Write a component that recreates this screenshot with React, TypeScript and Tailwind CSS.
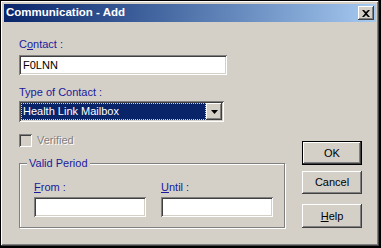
import React from 'react';

const raised =
  'shadow-[inset_-1px_-1px_0_#404040,inset_1px_1px_0_#ffffff,inset_-2px_-2px_0_#808080,inset_2px_2px_0_#d4d0c8]';
const sunken =
  'shadow-[inset_1px_1px_0_#808080,inset_-1px_-1px_0_#ffffff,inset_2px_2px_0_#404040,inset_-2px_-2px_0_#d4d0c8]';

function Label({ children }: { children: React.ReactNode }) {
  return <div className="h-[13px] text-[11px] leading-[13px] text-[#1a1a9c]">{children}</div>;
}

function Field({ value, className }: { value?: string; className: string }) {
  return (
    <div className={`bg-white ${sunken} ${className} flex items-center px-[4px] text-[11px] text-black`}>
      {value}
    </div>
  );
}

function Button({ children, isDefault, className }: { children: React.ReactNode; isDefault?: boolean; className?: string }) {
  return (
    <div className={`w-[60px] ${isDefault ? 'border border-black' : ''} ${className ?? ''}`}>
      <div className={`h-full w-full ${raised} flex items-center justify-center text-[11px] text-black`}>{children}</div>
    </div>
  );
}

export default function App() {
  return (
    <div className="w-[381px] h-[248px] bg-black pt-[1px] pl-[1px] font-['Liberation_Sans',Arial,sans-serif]">
      <div className={`w-[378px] h-[245px] bg-[#d4d0c8] p-[3px] ${raised}`}>
        {/* title bar */}
        <div className="h-[18px] flex items-center justify-between bg-gradient-to-r from-[#0a246a] to-[#a6caf0] pl-[2px] pr-[2px]">
          <span className="text-[11.5px] font-bold text-white leading-none">Communication - Add</span>
          <div className={`w-[16px] h-[14px] bg-[#d4d0c8] ${raised} flex items-center justify-center`}>
            <svg width="8" height="7" viewBox="0 0 8 7">
              <path d="M0 0h2l2 2 2-2h2L5 3.5 8 7H6L4 5 2 7H0l3-3.5z" fill="#000" />
            </svg>
          </div>
        </div>

        {/* body */}
        <div className="flex pl-[15px] pt-[16px]">
          <div className="w-[267px] flex flex-col">
            <Label>
              C<span className="underline">o</span>ntact :
            </Label>
            <Field value="F0LNN" className="mt-[4px] w-[208px] h-[20px]" />

            <div className="mt-[11px]">
              <Label>Type of Contact :</Label>
            </div>
            <div className={`mt-[2px] w-[205px] h-[21px] bg-white ${sunken} p-[2px] flex`}>
              <div className="flex-1 bg-[#0a246a] outline outline-1 outline-dotted outline-[#e0e070] -outline-offset-1 flex items-center px-[2px] text-[11px] text-white">
                Health Link Mailbox
              </div>
              <div className={`w-[16px] bg-[#d4d0c8] ${raised} flex items-center justify-center`}>
                <svg width="7" height="4" viewBox="0 0 7 4">
                  <path d="M0 0h7L3.5 4z" fill="#000" />
                </svg>
              </div>
            </div>

            <div className="mt-[12px] flex items-center gap-[5px] h-[13px]">
              <div className={`w-[13px] h-[13px] bg-[#d4d0c8] ${sunken}`} />
              <span className="text-[11px] text-[#808080] [text-shadow:1px_1px_0_#ffffff]">Verified</span>
            </div>

            <div className="relative mt-[16px] w-[266px] h-[65px] border border-[#808080] shadow-[1px_1px_0_#ffffff,inset_1px_1px_0_#ffffff] pl-[14px] pt-[17px]">
              <span className="absolute -top-[7px] left-[7px] bg-[#d4d0c8] px-[2px] text-[11px] leading-[13px] text-[#1a1a9c]">
                Valid Period
              </span>
              <div className="flex gap-[15px]">
                <div className="flex flex-col">
                  <Label>
                    <span className="underline">F</span>rom :
                  </Label>
                  <Field className="mt-[3px] w-[112px] h-[20px]" />
                </div>
                <div className="flex flex-col">
                  <Label>
                    <span className="underline">U</span>ntil :
                  </Label>
                  <Field className="mt-[3px] w-[112px] h-[20px]" />
                </div>
              </div>
            </div>
          </div>

          <div className="ml-[16px] pt-[103px] flex flex-col">
            <Button isDefault className="h-[24px]">OK</Button>
            <Button className="mt-[6px] h-[23px]">Cancel</Button>
            <Button className="mt-[10px] h-[24px]">
              <span className="underline">H</span>elp
            </Button>
          </div>
        </div>
      </div>
    </div>
  );
}
